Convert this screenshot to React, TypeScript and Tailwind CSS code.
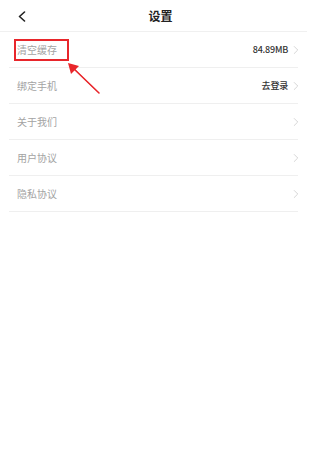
import { ChevronRight } from "lucide-react";

const font = {
  fontFamily: '"Noto Sans CJK SC", "Noto Sans", sans-serif',
};

type Row = {
  label: string;
  value?: string;
  marked?: boolean;
};

const rows: Row[] = [
  { label: "清空缓存", value: "84.89MB", marked: true },
  { label: "绑定手机", value: "去登录" },
  { label: "关于我们" },
  { label: "用户协议" },
  { label: "隐私协议" },
];

function SettingRow({ row }: { row: Row }) {
  return (
    <div className="relative flex h-[36px] items-center justify-between border-b border-[#efefef] pl-2">
      <span className="text-[10px] text-[#a3a3a3]">{row.label}</span>
      {row.marked && (
        <div className="absolute left-[5px] top-[7px] h-[22px] w-[55px] border-2 border-[#e8262b]" />
      )}
      <div className="-mr-[5px] flex items-center gap-[1px]">
        {row.value && (
          <span className="text-[9px] font-medium tracking-[-0.2px] text-[#333]">{row.value}</span>
        )}
        <ChevronRight className="h-[14px] w-[14px] text-[#c4c4c4]" strokeWidth={1.2} />
      </div>
    </div>
  );
}

export default function App() {
  return (
    <div className="relative h-[464px] w-[307px] bg-white" style={font}>
      <div className="relative flex h-[32px] items-center justify-center border-b border-[#f0f0f0]">
        <svg
          className="absolute left-[17px] top-[11px]"
          width="10"
          height="11"
          viewBox="0 0 10 11"
          fill="none"
        >
          <path d="M7.5 1 L2.5 5.5 L7.5 10" stroke="#222" strokeWidth="1.6" strokeLinecap="round" strokeLinejoin="round" />
        </svg>
        <h1 className="ml-[14px] text-[12px] font-bold text-[#222]">设置</h1>
      </div>
      <div className="mx-[9px]">
        {rows.map((row) => (
          <SettingRow key={row.label} row={row} />
        ))}
      </div>
      <svg
        className="absolute left-[60px] top-[56px]"
        width="46"
        height="44"
        viewBox="0 0 46 44"
        fill="none"
      >
        <polygon points="13,11 15,14 39,38 38,37" fill="#e8262b" />
        <line x1="13" y1="12" x2="39" y2="37" stroke="#e8262b" strokeWidth="1.6" strokeLinecap="round" />
        <polygon points="8,7 19,10 11,18" fill="#e8262b" />
      </svg>
    </div>
  );
}
